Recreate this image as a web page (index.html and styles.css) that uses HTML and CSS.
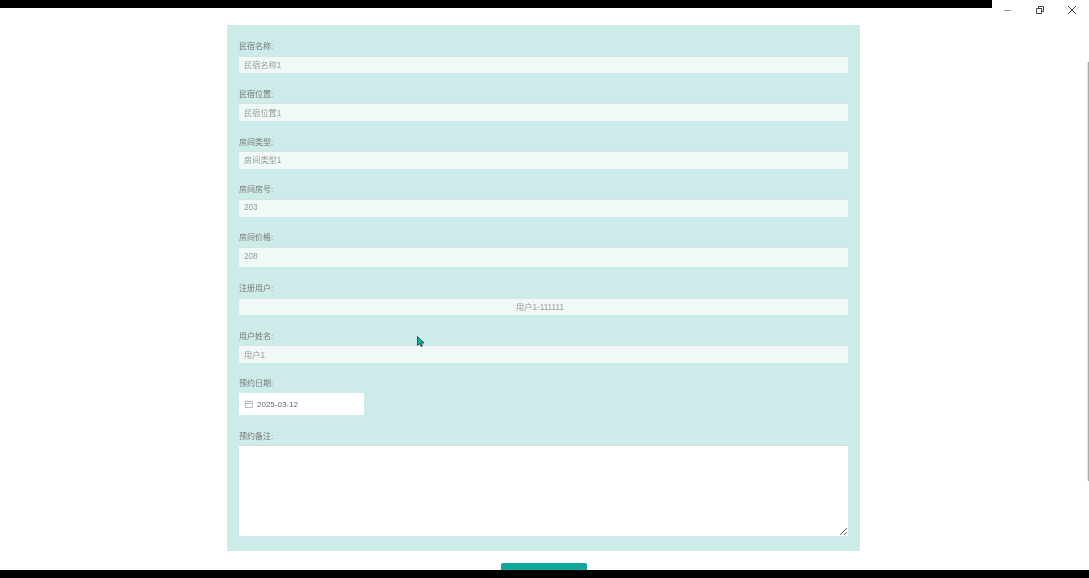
FILE: index.html
```html
<!DOCTYPE html>
<html lang="zh">
<head>
    <meta charset="UTF-8">
    <title>预约</title>
    <link rel="stylesheet" href="styles.css">
</head>
<body>

    <!-- Window top -->
    <div class="topbar">
        <div class="black-strip"></div>
        <div class="win-controls">
            <svg width="10" height="10" viewBox="0 0 10 10"><path d="M1 5.5h7" stroke="#999" fill="none"/></svg>
            <svg width="10" height="10" viewBox="0 0 10 10"><path d="M1.5 3.5h5v5h-5zM3.5 3.5v-2h5v5h-2" stroke="#444" fill="none"/></svg>
            <svg width="10" height="10" viewBox="0 0 10 10"><path d="M1 1l8 8M9 1l-8 8" stroke="#444" fill="none"/></svg>
        </div>
    </div>

    <form class="card">
        <div class="field">
            <label>民宿名称:</label>
            <input class="ro" type="text" readonly value="民宿名称1">
        </div>
        <div class="field">
            <label>民宿位置:</label>
            <input class="ro" type="text" readonly value="民宿位置1">
        </div>
        <div class="field">
            <label>房间类型:</label>
            <input class="ro" type="text" readonly value="房间类型1">
        </div>
        <div class="field">
            <label>房间房号:</label>
            <input class="ro" type="text" readonly value="203">
        </div>
        <div class="field">
            <label>房间价格:</label>
            <input class="ro tall" type="text" readonly value="208">
        </div>
        <div class="field">
            <label>注册用户:</label>
            <input class="ro center" type="text" readonly value="用户1-111111">
        </div>
        <div class="field">
            <label>用户姓名:</label>
            <input class="ro" type="text" readonly value="用户1">
        </div>
        <div class="field">
            <label>预约日期:</label>
            <div class="date-box">
                <svg width="8" height="8" viewBox="0 0 8 8"><path d="M.5 1.5h7v6h-7zM.5 3.5h7M2 .5v1M6 .5v1" stroke="#bbb" fill="none"/></svg>
                <span>2025-03-12</span>
            </div>
        </div>
        <div class="field">
            <label>预约备注:</label>
            <textarea></textarea>
        </div>
    </form>

    <button class="submit" type="button"></button>

    <!-- Things lying over the page -->
    <div class="scroll-thumb"></div>
    <div class="black-bottom"></div>
    <svg class="cursor" width="8" height="12" viewBox="0 0 8 12"><path d="M.5.5v9l2-2 1.5 3 1.5-.7L4 7h3z" fill="#12b59a" stroke="#234"  stroke-width=".8"/></svg>

</body>
</html>
```

FILE: styles.css
```css
html, body {
    margin: 0;
    height: 578px;
    overflow: hidden;
}
body {
    position: relative;
    box-sizing: border-box;
    padding-right: 2px;
    background-color: #fff;
    font-family: "Liberation Sans", "Noto Sans CJK SC", sans-serif;
    font-size: 8px;
    color: #777;
}

.topbar {
    display: flex;
    align-items: flex-start;
    height: 25px;
    margin-right: -2px;
}
.black-strip {
    flex: 1;
    height: 8px;
    background-color: #000;
}
.win-controls {
    width: 97px;
    height: 21px;
    display: flex;
    align-items: center;
    justify-content: space-between;
    box-sizing: border-box;
    padding: 0 12px 1px 11px;
}

.card {
    width: 633px;
    margin: 0 auto;
    box-sizing: border-box;
    padding: 17px 12px 15px;
    background-color: #cdebe9;
    filter: blur(0.4px);
}
.field {
    margin-bottom: 16.6px;
}
.field:last-child {
    margin-bottom: 0;
}
.field label {
    display: block;
    height: 13.6px;
    line-height: 9px;
    color: #777;
}

input {
    display: block;
    width: 100%;
    height: 17.6px;
    padding: 0 5px 2px;
    box-sizing: border-box;
    border: 0;
    border-top: 1px solid #d5e3e1;
    outline: none;
    font: inherit;
    font-size: 8.2px;
    color: #999;
}
.ro {
    background-color: #f0f9f8;
}
.tall {
    height: 20.6px;
}
.center {
    padding-right: 12px;
    text-align: center;
}

.date-box {
    display: flex;
    align-items: center;
    gap: 4px;
    width: 125px;
    height: 22px;
    padding-left: 6px;
    box-sizing: border-box;
    background-color: #fff;
    color: #666;
}

textarea {
    display: block;
    width: 100%;
    height: 91px;
    box-sizing: border-box;
    border: 0;
    border-top: 1px solid #dcdcdc;
    background-color: #fff;
    outline: none;
}

.submit {
    display: block;
    width: 86px;
    height: 30px;
    margin: 12px auto 0;
    border: 0;
    border-radius: 2px;
    background-color: #0fa89a;
}

.scroll-thumb {
    position: absolute;
    right: 0;
    top: 62px;
    width: 1px;
    height: 419px;
    background-color: #aaa;
    border-left: 1px solid #e8e8e8;
}
.black-bottom {
    position: absolute;
    left: 0;
    right: 0;
    top: 570px;
    height: 8px;
    background-color: #000;
}
.cursor {
    position: absolute;
    left: 417px;
    top: 336px;
}
```
